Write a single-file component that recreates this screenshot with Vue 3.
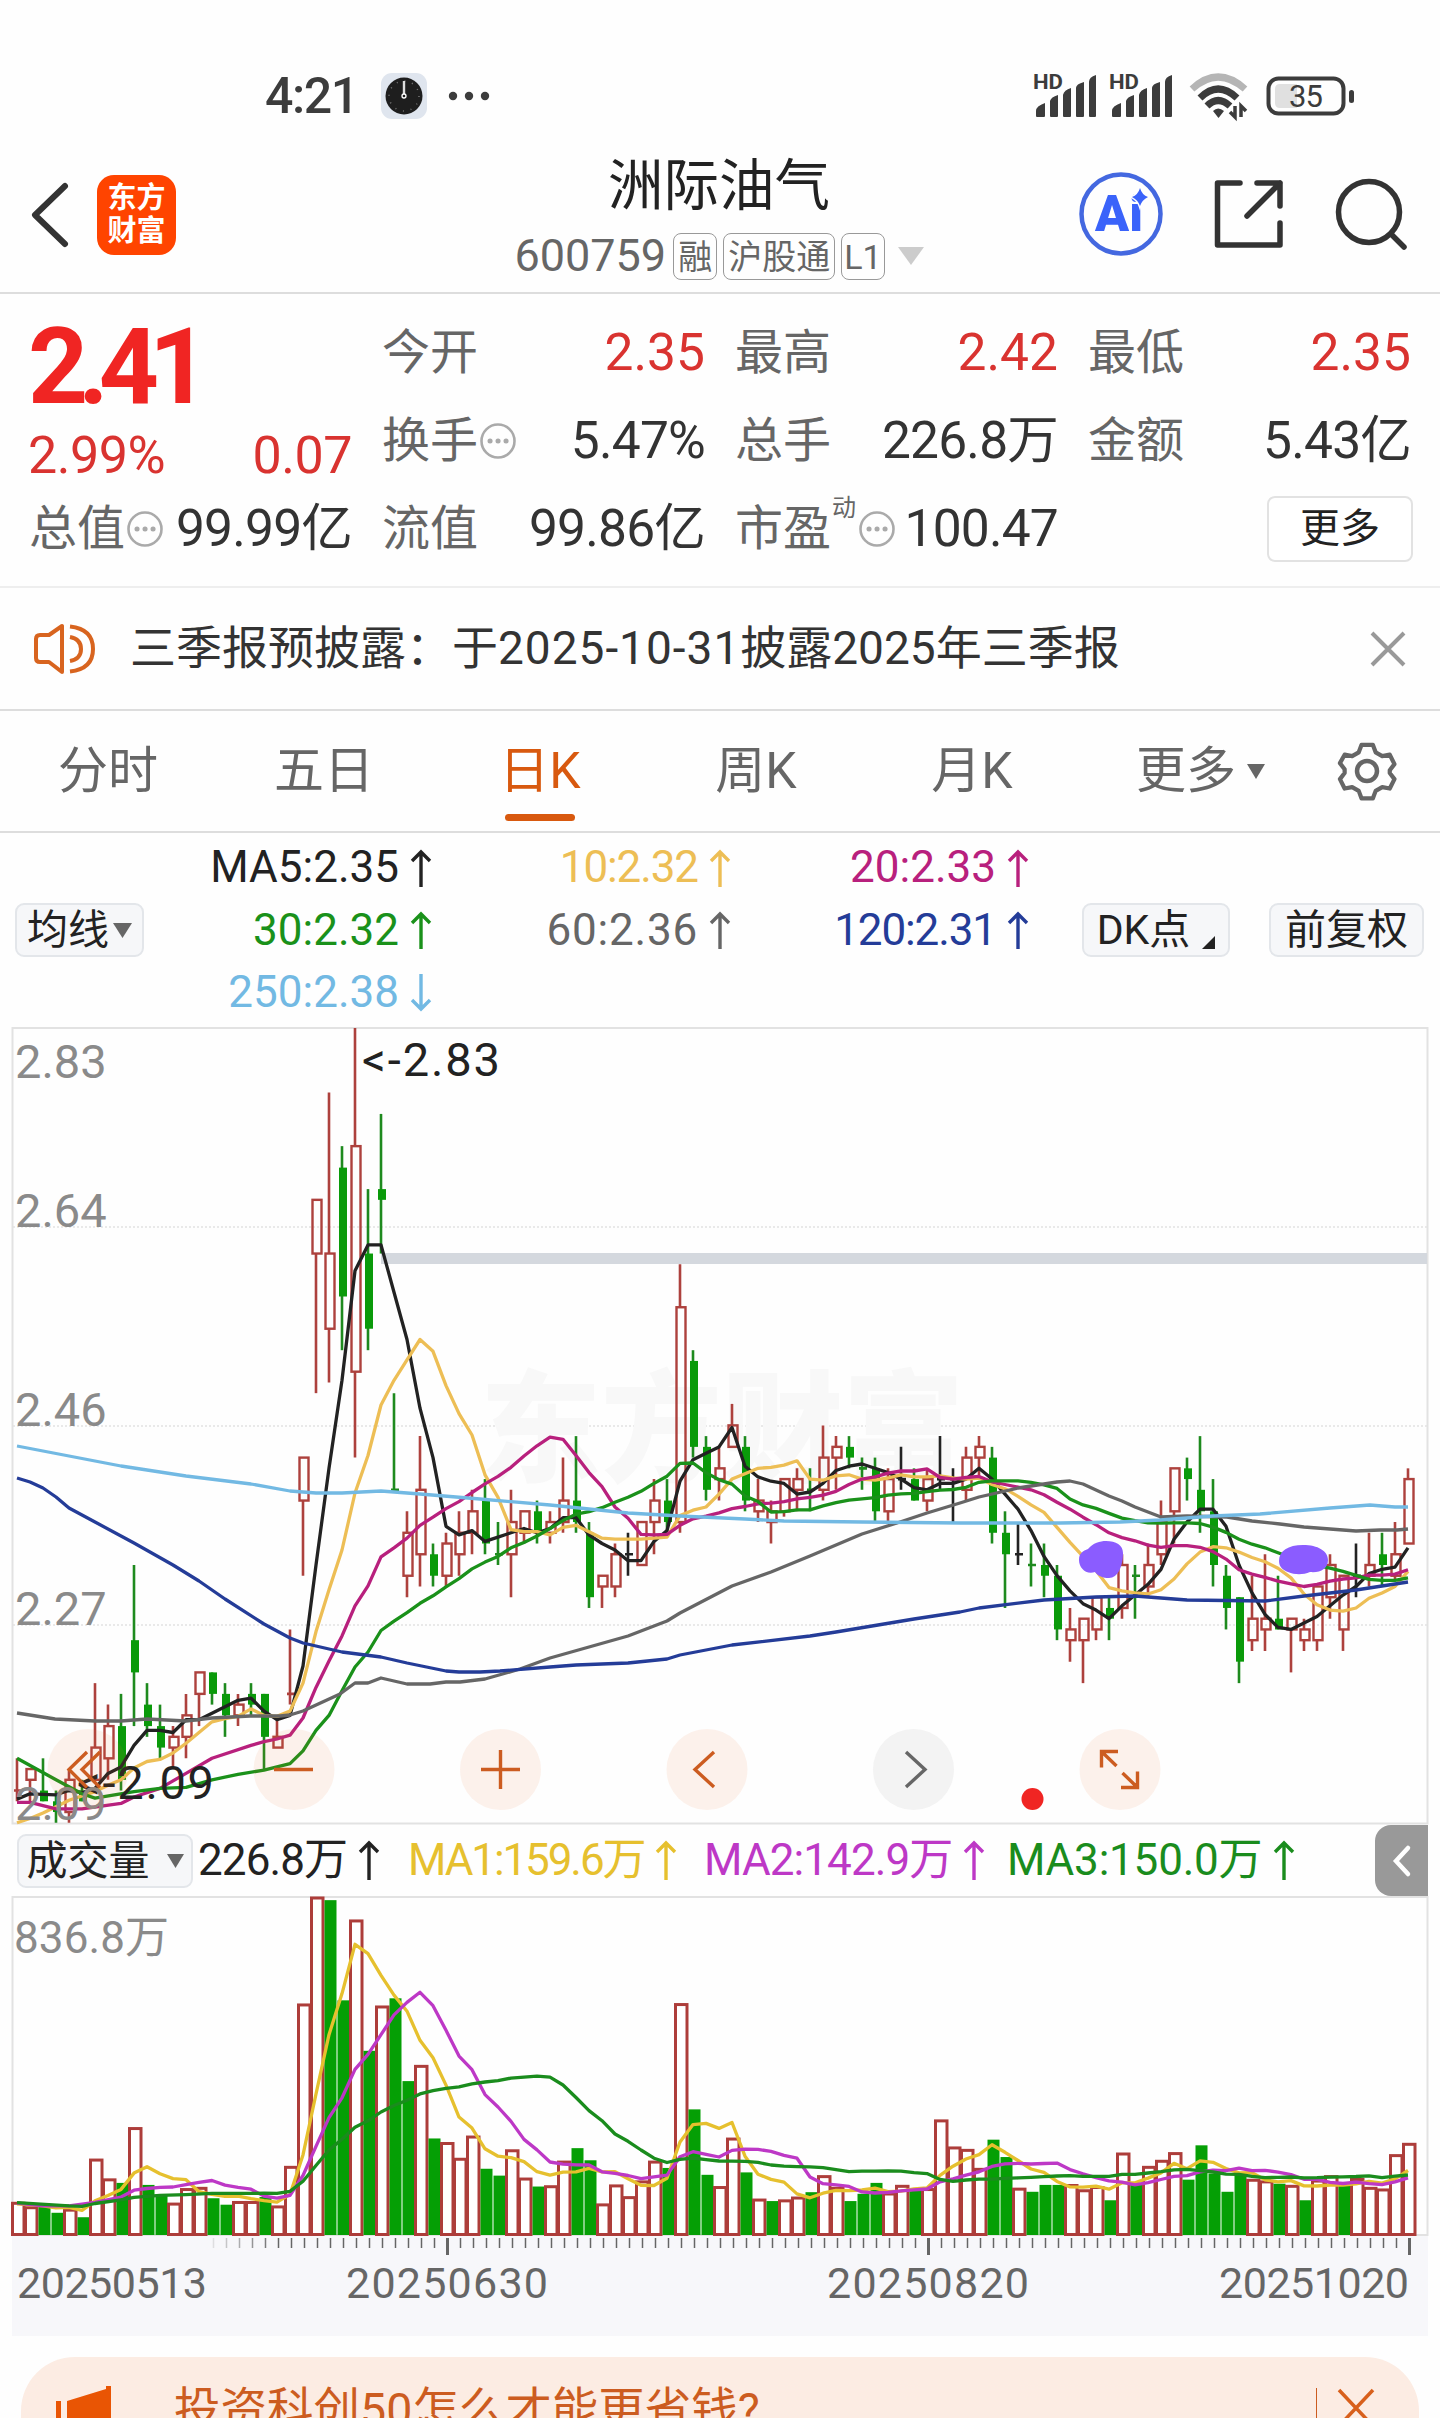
<script setup>
// [open, close, high, low] in cents, one entry per trading day
const days = [
  [212, 212, 215, 211], [213, 214, 214, 211], [212, 211, 215, 211], [211, 210, 212, 209],
  [210, 213, 214, 209], [212, 211, 213, 211], [213, 216, 222, 213], [215, 218, 220, 213],
  [218, 213, 221, 212], [226, 223, 233, 218], [220, 218, 222, 217], [218, 216, 220, 215],
  [216, 217, 218, 214], [217, 219, 221, 215], [221, 223, 223, 218], [223, 221, 223, 220],
  [221, 219, 222, 217], [219, 220, 221, 218], [221, 220, 222, 219], [221, 217, 221, 214],
  [216, 217, 219, 216], [221, 221, 227, 220], [239, 243, 243, 232], [262, 267, 267, 249],
  [255, 262, 277, 250], [270, 258, 272, 253], [251, 272, 283, 243], [262, 255, 268, 253],
  [268, 267, 275, 262], [240, 240, 249, 240], [232, 236, 238, 230], [234, 240, 245, 231],
  [234, 232, 235, 231], [232, 235, 236, 231], [234, 236, 238, 232], [236, 238, 240, 234],
  [239, 235, 241, 234], [234, 234, 237, 233], [234, 237, 240, 230], [236, 238, 238, 235],
  [238, 236, 239, 235], [236, 237, 238, 235], [237, 239, 243, 236], [239, 237, 245, 236],
  [236, 230, 237, 229], [231, 232, 232, 229], [231, 234, 235, 230], [234, 234, 236, 232],
  [233, 237, 237, 233], [237, 239, 241, 234], [239, 237, 241, 236], [237, 257, 261, 236],
  [252, 244, 253, 243], [244, 240, 245, 239], [241, 242, 244, 239], [244, 246, 248, 244],
  [244, 239, 245, 238], [238, 239, 241, 237], [237, 238, 239, 235], [238, 241, 241, 237.5],
  [240, 241, 242, 238], [240, 240, 242, 238], [240, 243, 246, 239], [243, 244, 245, 240],
  [244, 243, 245, 242], [242, 242, 243, 240], [242, 238, 243, 237], [238, 241, 242, 237],
  [241, 241, 244, 240], [241, 239, 242, 239], [239, 241, 242, 238], [241, 241, 245, 240],
  [241, 241, 242, 237], [240, 243, 244, 239], [243, 244, 245, 241], [243, 236, 244, 235],
  [236, 234, 238, 229], [234, 234, 237, 233], [233, 233, 235, 231], [233, 232, 235, 230],
  [232, 227, 233, 226], [226, 227, 229, 224], [226, 228, 228, 222], [227, 230, 230, 226],
  [229, 228, 230, 226], [229, 233, 234, 228], [232, 232, 233, 228], [231, 233, 235, 230],
  [234, 237, 239, 233], [238, 242, 242, 235], [242, 241, 243, 239], [240, 238, 245, 236],
  [238, 233, 241, 231], [232, 229, 233, 227], [230, 224, 230, 222], [226, 228, 232, 225],
  [227, 228, 234, 225], [228, 227, 232, 227], [227, 228, 228, 223], [226, 227, 228, 225],
  [226, 231, 231, 225], [230, 233, 234, 228], [227, 232, 232, 225], [232, 232, 235, 230],
  [232, 233, 236, 231], [234, 233, 236, 231], [232, 234, 237, 231.5], [235, 241, 242, 235]
]

// daily volume, in 万
const volumes = [
  81, 70, 72, 55, 64, 44, 188, 139, 129, 266, 124, 100, 79, 115, 118, 91, 75, 83, 83, 94,
  72, 170, 572, 836.8, 829, 581, 780, 456, 567, 586, 381, 420, 239, 229, 190, 245, 164, 147, 211, 141,
  120, 122, 183, 215, 185, 77, 124, 95, 134, 183, 166, 573, 311, 149, 120, 240, 155, 89, 84, 87,
  94, 106, 147, 118, 84, 102, 129, 104, 123, 111, 115, 285, 218, 212, 165, 236, 193, 116, 107, 124,
  124, 125, 112, 120, 86, 203, 125, 170, 185, 204, 137, 222, 152, 107, 152, 138, 134, 127, 123, 86,
  136, 147, 124, 140, 118, 114, 199, 227
]

const dayX = (i) => 17 + 13 * i
const priceY = (p) => 1028 + (283 - p) * 10.74
const volumeY = (v) => 2235 - (v * 338) / 836.8

const closes = days.map((d) => d[1])
const lastClose = (i) => (i === 0 ? 211 : closes[i - 1])

const candles = days.map(([open, close, high, low], i) => {
  let kind = close > open ? 'up' : 'down'
  if (open === close) {
    kind = close > lastClose(i) ? 'up' : close < lastClose(i) ? 'down' : 'flat'
  }
  return {
    x: dayX(i),
    kind,
    doji: open === close,
    high: priceY(high),
    low: priceY(low),
    top: priceY(Math.max(open, close)),
    bottom: priceY(Math.min(open, close))
  }
})

const bars = volumes.map((v, i) => ({
  x: dayX(i),
  up: closes[i] >= lastClose(i),
  y: volumeY(v)
}))

// Moving average as polyline points; seed covers the days before a full window exists
function average(values, size, seed, toY) {
  const points = seed.map(([i, v]) => [dayX(i), toY(v)])
  for (let i = size - 1; i < values.length; i++) {
    const sum = values.slice(i - size + 1, i + 1).reduce((a, b) => a + b, 0)
    points.push([dayX(i), toY(sum / size)])
  }
  return points.map(([x, y]) => `${x},${y.toFixed(1)}`).join(' ')
}

const priceLines = [
  { cls: 'ma5', points: average(closes, 5, [[0, 211.2], [1, 211.7], [3, 211.6]], priceY) },
  { cls: 'ma10', points: average(closes, 10, [[0, 209], [1, 209.4], [2, 209.9], [3, 210.5], [4, 211.1], [6, 211.9], [7, 212.5], [8, 213]], priceY) },
  { cls: 'ma20', points: average(closes, 20, [[0, 210.9], [1, 210.9], [2, 210.6], [3, 210.3], [5, 210.3], [8, 210.8], [9, 211.4], [11, 212.2], [13, 213.6], [15, 215], [18, 216.2]], priceY) },
  { cls: 'ma30', points: average(closes, 30, [[0, 215], [3, 213], [5, 211.7], [6, 211.3], [9, 211.9], [11, 212.2], [13, 212.3], [15, 213], [17, 213.5], [19, 213.9], [21, 214.5], [22, 215.7], [23, 217.6], [24, 219], [25, 221.3], [26, 223.5], [27, 224.9], [28, 226.9]], priceY) },
  { cls: 'ma60', points: '17,1713 55,1719 75,1720 95,1721 121,1721 147,1719 186,1721 212,1718 250,1716 280,1716 290,1715 303,1711 340,1694 355,1683 368,1683 381,1678 407,1684 430,1684 446,1682 460,1682 485,1679 520,1669 550,1658 628,1636 667,1621 680,1613 732,1586 771,1572 810,1556 862,1534 897,1523 927,1513 960,1503 979,1497 1018,1488 1057,1482 1070,1481 1083,1484 1109,1496 1122,1501 1135,1507 1161,1517 1187,1516 1227,1517 1252,1521 1280,1524 1304,1527 1330,1529 1356,1531 1380,1530 1397,1530 1408,1529' },
  { cls: 'ma120', points: '17,1478 30,1482 43,1488 56,1497 69,1508 95,1522 121,1536 134,1543 173,1565 199,1581 225,1599 264,1624 290,1638 303,1643 342,1652 381,1657 407,1663 446,1671 459,1672 480,1672 500,1671 550,1667 576,1665 628,1663 667,1659 680,1655 732,1645 810,1636 836,1632 914,1619 960,1612 979,1608 1044,1600 1096,1597 1135,1596 1161,1598 1187,1600 1265,1601 1304,1596 1356,1590 1408,1582' },
  { cls: 'ma250', points: '17,1446 69,1456 121,1466 186,1476 251,1484 290,1491 316,1493 342,1493 381,1491 420,1494 480,1499 550,1505 628,1513 680,1516 745,1519 784,1521 862,1522 960,1523 1060,1523 1120,1522 1160,1520 1187,1518 1213,1516 1260,1514 1330,1508 1370,1505 1382,1506 1395,1507 1408,1507' }
]

const volumeLines = [
  { cls: 'vma1', points: average(volumes, 5, [[0, 77], [2, 72], [3, 67]], volumeY) },
  { cls: 'vma2', points: average(volumes, 10, [[0, 79], [2, 72], [4, 72], [6, 81], [8, 94]], volumeY) },
  { cls: 'vma3', points: average(volumes, 20, [[0, 80], [4, 72], [5, 71], [6, 78], [8, 87], [9, 93], [11, 98], [13, 100], [15, 103], [18, 103]], volumeY) }
]

const priceLabels = [
  { text: '2.83', y: 1078 },
  { text: '2.64', y: 1227 },
  { text: '2.46', y: 1426 },
  { text: '2.27', y: 1625 },
  { text: '2.09', y: 1820 }
]

const ticks = days
  .map((_, i) => ({ x: dayX(i) + 1.5, major: [33, 70, 107].includes(i), opacity: Math.min(1, (i - 14) / 6) }))
  .slice(15)

const dates = [
  { text: '20250513', x: 17, w: 190 },
  { text: '20250630', x: 346, w: 202 },
  { text: '20250820', x: 827, w: 202 },
  { text: '20251020', x: 1219, w: 190 }
]

const tabs = ['分时', '五日', '日K', '周K', '月K']

const legend = [
  { text: 'MA5:2.35', cls: 'ma5', up: true },
  { text: '10:2.32', cls: 'ma10 tight', up: true },
  { text: '20:2.33', cls: 'ma20', up: true },
  { text: '30:2.32', cls: 'ma30', up: true },
  { text: '60:2.36', cls: 'ma60 loose', up: true },
  { text: '120:2.31', cls: 'ma120 tight', up: true },
  { text: '250:2.38', cls: 'ma250', up: false }
]

const volumeLegend = [
  { text: '226.8万', cls: 'ma5' },
  { text: 'MA1:159.6万', cls: 'vma1 tight' },
  { text: 'MA2:142.9万', cls: 'vma2' },
  { text: 'MA3:150.0万', cls: 'vma3 loose' }
]

const stats = [
  { label: '今开', value: '2.35', red: true },
  { label: '最高', value: '2.42', red: true },
  { label: '最低', value: '2.35', red: true },
  { label: '换手', value: '5.47%', info: true },
  { label: '总手', value: '226.8万' },
  { label: '金额', value: '5.43亿' }
]

const valuation = [
  { label: '总值', value: '99.99亿', info: true },
  { label: '流值', value: '99.86亿' },
  { label: '市盈', value: '100.47', info: true, sup: '动' }
]
</script>

<template>
  <div class="screen">
    <div class="status-bar">
      <div class="status-left">
        <span class="clock">4:21</span>
        <svg class="clock-icon" width="46" height="46" viewBox="0 0 46 46">
          <rect width="46" height="46" rx="11" fill="#dfe5ee" />
          <circle cx="23" cy="23" r="18.5" fill="#1e1e1e" />
          <circle cx="23" cy="23" r="15" fill="none" stroke="#777" stroke-width="1.5" stroke-dasharray="1 6.85" />
          <path d="M23 8v13" stroke="#ddd" stroke-width="2.4" />
          <circle cx="23" cy="23" r="2" fill="none" stroke="#fff" stroke-width="1.3" />
        </svg>
        <svg width="42" height="10" viewBox="0 0 42 10" fill="#3c3c3c">
          <circle cx="5" cy="5" r="4.2" /><circle cx="21" cy="5" r="4.2" /><circle cx="37" cy="5" r="4.2" />
        </svg>
      </div>
      <div class="status-right">
        <svg v-for="n in 2" :key="n" class="signal" width="64" height="46" viewBox="0 -4 64 46" fill="#3c3c3c">
          <text x="0" y="14" font-size="20" font-weight="700" textLength="30" lengthAdjust="spacingAndGlyphs">HD</text>
          <path d="M3 41v-5q0-5 9-8v13q0 1-1 1H4q-1 0-1-1zM17 41V26q1-4 8-6v21q0 1-1 1h-6q-1 0-1-1zM30 41V20q1-5 8-7v28q0 1-1 1h-6q-1 0-1-1zM43 41V13q0-4 8-6v34q0 1-1 1h-6q-1 0-1-1zM56 41V7q0-5 7-7v41q0 1-1 1h-5q-1 0-1-1z" />
        </svg>
        <svg class="wifi" width="60" height="46" viewBox="0 0 60 46" fill="none" stroke="#3c3c3c" stroke-width="7">
          <path d="M3 16Q29-8 56 16" stroke="#b5b5b5" />
          <path d="M11 25Q29 7 48 25" />
          <path d="M18 33Q29 22 41 33" />
          <path d="M24 38q5-5 11 0l-5.5 7z" fill="#3c3c3c" stroke="none" />
          <path d="M46 33v11l-5-5M52 44V33l5 5" stroke-width="3.5" />
        </svg>
        <svg width="90" height="40" viewBox="0 0 90 40">
          <rect x="2.5" y="2.5" width="75" height="35" rx="10" fill="none" stroke="#3c3c3c" stroke-width="4" />
          <path d="M14 8h17v24H14q-5 0-5-5V13q0-5 5-5z" fill="#e0e0e0" />
          <text x="23" y="31" font-size="31" fill="#3c3c3c" textLength="34">35</text>
          <rect x="83" y="14" width="5" height="13" rx="2.5" fill="#3c3c3c" />
        </svg>
      </div>
    </div>

    <div class="header">
      <div class="header-left">
        <svg width="38" height="66" viewBox="0 0 38 66" fill="none" stroke="#333" stroke-width="6" stroke-linecap="round" stroke-linejoin="round">
          <path d="M34 4L4 33l30 29" />
        </svg>
        <div class="logo"><span>东方</span><span>财富</span></div>
      </div>
      <div class="title">
        <div class="stock-name">洲际油气</div>
        <div class="stock-sub">
          <span class="code">600759</span>
          <span class="chip">融</span>
          <span class="chip">沪股通</span>
          <span class="chip narrow">L1</span>
          <svg class="sub-arrow" width="26" height="18" viewBox="0 0 26 18"><path d="M0 0h26L13 18z" fill="#ccc" /></svg>
        </div>
      </div>
      <div class="header-right">
        <svg width="84" height="84" viewBox="0 0 84 84">
          <circle cx="42" cy="42" r="39.5" fill="none" stroke="#4468e0" stroke-width="4.5" />
          <text class="ai" x="16" y="59" textLength="48">Ai</text>
          <path d="M61 16q2 7 8 9-6 3-8 9-2-6-8-9 6-2 8-9z" fill="#3a63fa" stroke="#fefefe" stroke-width="3" paint-order="stroke" />
        </svg>
        <svg width="70" height="70" viewBox="0 0 70 70" fill="none" stroke="#333" stroke-width="5.5" stroke-linecap="round" stroke-linejoin="round">
          <path d="M26 4H3.5v62H66V44M43 4h23v23M66 4L33 37" />
        </svg>
        <svg width="72" height="72" viewBox="0 0 72 72" fill="none" stroke="#333" stroke-width="5.5" stroke-linecap="round">
          <circle cx="34" cy="34" r="30.5" /><path d="M56 56l13 13" />
        </svg>
      </div>
    </div>

    <div class="quote">
      <div class="quote-main">
        <div class="price">2.41</div>
        <div class="change"><span>2.99%</span><span>0.07</span></div>
      </div>
      <div v-for="s in stats" :key="s.label" class="stat">
        <span class="label">{{ s.label }}</span>
        <svg v-if="s.info" class="info" width="36" height="36" viewBox="0 0 36 36">
          <circle cx="18" cy="18" r="16.5" fill="none" stroke="#aaa" stroke-width="2.6" />
          <path d="M10 18h.1M18 18h.1M26 18h.1" stroke="#aaa" stroke-width="5" stroke-linecap="round" />
        </svg>
        <span class="value" :class="{ red: s.red }">{{ s.value }}</span>
      </div>
      <div v-for="s in valuation" :key="s.label" class="stat">
        <span class="label">{{ s.label }}</span>
        <span v-if="s.sup" class="sup">{{ s.sup }}</span>
        <svg v-if="s.info" class="info" width="36" height="36" viewBox="0 0 36 36">
          <circle cx="18" cy="18" r="16.5" fill="none" stroke="#aaa" stroke-width="2.6" />
          <path d="M10 18h.1M18 18h.1M26 18h.1" stroke="#aaa" stroke-width="5" stroke-linecap="round" />
        </svg>
        <span class="value">{{ s.value }}</span>
      </div>
      <div class="more-cell"><button class="more">更多</button></div>
    </div>

    <div class="notice">
      <svg width="62" height="52" viewBox="0 0 62 52" fill="none" stroke="#d8641f" stroke-width="4" stroke-linejoin="round">
        <path d="M28 3v46L15 39H6q-4 0-4-4V16q0-4 4-4h9z" />
        <path d="M36 14q11 2 11 12T36 38M36 3.5Q59 6 59 26T36 48.5" />
      </svg>
      <div class="notice-text">三季报预披露：于<span class="notice-date">2025-10-31</span>披露2025年三季报</div>
      <svg width="34" height="34" viewBox="0 0 34 34" stroke="#999" stroke-width="4"><path d="M1 1l32 32M33 1L1 33" /></svg>
    </div>

    <div class="tabs">
      <div v-for="tab in tabs" :key="tab" class="tab" :class="{ active: tab === '日K' }">{{ tab }}</div>
      <div class="tab-more">
        更多
        <svg width="18" height="15" viewBox="0 0 18 15"><path d="M0 0h18L9 15z" fill="#666" /></svg>
      </div>
      <svg class="gear" width="60" height="62" viewBox="0 0 60 62" fill="none" stroke="#666" stroke-width="4.5" stroke-linejoin="round">
        <path d="M24 3h12l3 8 7 4 8-1.5 5 10-5 6.500v3l5 6.500-5 10-8-1.500-7 4-3 8H24l-3-8-7-4-8 1.500-5-10L6 33v-4L1 22.500l5-9L14 15l7-4z" transform="translate(2 2) scale(.94)" />
        <circle cx="30" cy="31" r="10" />
      </svg>
    </div>

    <div class="ma-bar">
      <button class="pill ma-pill">均线<svg width="19" height="15" viewBox="0 0 19 15"><path d="M0 0h19L9.5 15z" fill="#666" /></svg></button>
      <div class="legend">
        <div v-for="item in legend" :key="item.text" class="legend-item" :class="item.cls">
          {{ item.text }}
          <svg width="20" height="38" viewBox="0 0 20 38" fill="none" stroke="currentColor" stroke-width="3.4">
            <path :d="item.up ? 'M10 38V3M1 12l9-9 9 9' : 'M10 0v35M1 26l9 9 9-9'" />
          </svg>
        </div>
      </div>
      <button class="pill dk">DK点<svg width="13" height="13" viewBox="0 0 13 13"><path d="M13 0v13H0z" fill="#222" /></svg></button>
      <button class="pill adjust">前复权</button>
    </div>

    <svg class="price-chart" width="1440" height="798" viewBox="0 1027 1440 798">
      <path class="grid" d="M13 1227H1427M13 1426H1427M13 1625H1427" />
      <text class="watermark" x="480" y="1472" textLength="484">东方财富</text>
      <rect class="frame" x="12.5" y="1028" width="1415" height="795.5" />
      <rect x="381" y="1253" width="1046" height="11" fill="#d4d8de" />

      <g v-for="c in candles" :key="c.x" :class="c.kind">
        <template v-if="c.doji">
          <path class="stroke" :d="`M${c.x} ${c.high}V${c.low}M${c.x - 3} ${c.top}h8`" />
        </template>
        <template v-else-if="c.kind === 'up'">
          <path class="stroke" :d="`M${c.x} ${c.high}V${c.top}M${c.x} ${c.bottom}V${c.low}`" />
          <rect class="hollow" :x="c.x - 3.5" :y="c.top" width="9" :height="c.bottom - c.top" />
        </template>
        <template v-else>
          <path class="stroke" :d="`M${c.x} ${c.high}V${c.low}`" />
          <rect class="solid" :x="c.x - 3" :y="c.top" width="8" :height="c.bottom - c.top" />
        </template>
      </g>

      <polyline v-for="l in priceLines" :key="l.cls" class="line" :class="l.cls" :points="l.points" />

      <g fill="#8b5cff">
        <path d="M1079 1560c0-7 4-9 9-11 5-6 12-8 18-8 10 0 17 4 17 12 0 13-5 25-14 25-6 0-11-2-14-6-9 3-16-4-16-12z" />
        <path d="M1279 1561c0-10 9-16 24-16s25 6 25 15-8 13-18 12c-7 3-15 3-22 0-5-2-9-5-9-11z" />
      </g>

      <text class="mark" x="362" y="1076" textLength="138">&lt;-2.83</text>
      <text class="mark" x="77" y="1799" textLength="137">&lt;-2.09</text>
      <text v-for="l in priceLabels" :key="l.text" class="axis-label" x="15" :y="l.y">{{ l.text }}</text>

      <g class="control">
        <circle cx="88" cy="1769.5" r="40.5" />
        <path d="M87 1752l-18 17.5 18 18M100 1752l-18 17.5 18 18" />
        <circle cx="294" cy="1769.5" r="40.5" />
        <path d="M274 1769.5h39" />
        <circle cx="500.5" cy="1769.5" r="40.5" />
        <path d="M481 1769.5h39M500.5 1750v39" />
        <circle cx="707" cy="1769.5" r="40.5" />
        <path d="M714 1752l-19 17.5 19 17.5" />
        <circle cx="1120" cy="1769.5" r="40.5" />
        <path d="M1118 1751.5h-16.5v16M1102 1752l14.5 14M1121 1787.5h16.5v-16M1137 1787l-14.5-14" />
      </g>
      <circle cx="913.5" cy="1769.5" r="40.5" fill="#f3f3f3" />
      <path d="M906 1752l19 17.5-19 17.5" fill="none" stroke="#666" stroke-width="3.4" />
      <circle cx="1032.5" cy="1799" r="11" fill="#f02523" />
    </svg>

    <div class="volume-bar">
      <button class="pill volume-pill">成交量<svg width="17" height="14" viewBox="0 0 17 14"><path d="M0 0h17L8.5 14z" fill="#666" /></svg></button>
      <div class="volume-legend">
        <div v-for="item in volumeLegend" :key="item.text" class="legend-item" :class="item.cls">
          {{ item.text }}
          <svg width="20" height="40" viewBox="0 0 20 40" fill="none" stroke="currentColor" stroke-width="3.4">
            <path d="M10 40V3M1 12l9-9 9 9" />
          </svg>
        </div>
      </div>
      <div class="drawer">
        <svg width="18" height="32" viewBox="0 0 18 32" fill="none" stroke="#fff" stroke-width="4.5" stroke-linecap="round"><path d="M15 3L3 16l12 13" /></svg>
      </div>
    </div>

    <svg class="volume-chart" width="1440" height="440" viewBox="0 1896 1440 440">
      <rect x="12" y="2236" width="1416" height="100" fill="#f7f7fa" />
      <rect class="frame" x="12.5" y="1897" width="1415" height="338" />
      <text class="axis-label volume-max" x="14" y="1953" textLength="155">836.8万</text>
      <template v-for="b in bars" :key="b.x">
        <rect v-if="b.up" class="bar-up" :x="b.x - 4.5" :y="b.y + 1" width="11.5" :height="2233.5 - b.y" />
        <rect v-else class="bar-down" :x="b.x - 4.5" :y="b.y" width="12" :height="2235 - b.y" />
      </template>
      <polyline v-for="l in volumeLines" :key="l.cls" class="line" :class="l.cls" :points="l.points" />
      <path
        v-for="t in ticks"
        :key="t.x"
        :d="`M${t.x} 2238v${t.major ? 17 : 10}`"
        stroke="#666"
        :stroke-width="t.major ? 3 : 1.5"
        :opacity="t.opacity"
      />
      <text v-for="d in dates" :key="d.text" class="date" :x="d.x" y="2298" :textLength="d.w">{{ d.text }}</text>
    </svg>

    <div class="banner">
      <svg class="horn" width="56" height="70" viewBox="0 0 56 70" fill="#e95504"><path d="M0 15h5v55H0zM11 15L50 3V0h5v70H11z" /></svg>
      <div class="banner-text">投资科创50怎么才能更省钱?</div>
      <div class="banner-close">
        <svg width="38" height="40" viewBox="0 0 38 40" stroke="#d8601c" stroke-width="3.5"><path d="M2 2l34 36M36 2L2 38" /></svg>
      </div>
    </div>
  </div>
</template>

<style>
body {
  background: #fff;
  overflow: hidden;
}
</style>

<style scoped>
.screen {
  width: 1440px;
  height: 2418px;
  overflow: hidden;
  background: #fefefe;
  color: #333;
  font-family: Roboto, "Noto Sans CJK SC", sans-serif;
  line-height: 1.2;
}

.screen svg {
  display: block;
  flex: none;
  overflow: visible;
}

button {
  font-family: inherit;
}

.status-bar {
  display: flex;
  justify-content: space-between;
  align-items: center;
  height: 64px;
  padding: 64px 84px 0 265px;
}

.status-left,
.status-right {
  display: flex;
  align-items: center;
}

.clock {
  width: 87px;
  font-size: 50px;
  font-weight: 500;
  letter-spacing: -1.4px;
  color: #3c3c3c;
}

.clock-icon {
  margin: 0 21px 0 29px;
}

.signal {
  margin: 0 12px 4px 0;
}

.wifi {
  margin: 0 17px 0 4px;
}

.header {
  display: grid;
  grid-template-columns: 1fr auto 1fr;
  align-items: center;
  height: 164px;
  border-bottom: 2px solid #ddd;
  padding: 0 33px 0 31px;
}

.header-left {
  display: flex;
  align-items: center;
  gap: 28px;
  padding-top: 10px;
}

.logo {
  display: flex;
  flex-direction: column;
  align-items: center;
  justify-content: center;
  width: 79px;
  height: 80px;
  border-radius: 17px;
  background: #ff4400;
  color: #fff;
  font-size: 29px;
  font-weight: 700;
  line-height: 33px;
}

.title {
  display: flex;
  flex-direction: column;
  align-items: center;
  padding-top: 14px;
}

.stock-name {
  font-size: 55.5px;
  line-height: 66px;
  color: #222;
}

.stock-sub {
  display: flex;
  align-items: center;
  color: #666;
  margin-top: 12px;
}

.code {
  font-size: 45px;
  line-height: 48px;
  margin-right: 7px;
}

.chip {
  height: 45px;
  border: 1.5px solid #999;
  border-radius: 8px;
  padding: 0 4px;
  margin-right: 6px;
  font-size: 34px;
  line-height: 46px;
}

.chip.narrow {
  padding: 0 2px;
}

.sub-arrow {
  margin-left: 7px;
}

.header-right {
  display: flex;
  align-items: center;
  justify-content: flex-end;
  gap: 51px;
  padding-top: 8px;
}

.ai {
  fill: #3a63fa;
  font-size: 50px;
  font-weight: 900;
}

.quote {
  display: grid;
  grid-template-columns: repeat(4, 322px);
  grid-template-rows: repeat(3, 88px);
  column-gap: 31px;
  height: 264px;
  padding: 15px 30px 13px;
  border-bottom: 2px solid #eee;
}

.quote-main {
  grid-row: span 2;
  margin-left: -2px;
  color: #f02523;
}

.price {
  height: 90px;
  padding-top: 6px;
  font-size: 105px;
  font-weight: 700;
  line-height: 106px;
  letter-spacing: -10px;
}

.change {
  display: flex;
  justify-content: space-between;
  padding-top: 23px;
  font-size: 52px;
  line-height: 56px;
  letter-spacing: -0.5px;
  color: #d93330;
}

.stat {
  display: flex;
  align-items: center;
  white-space: nowrap;
}

.label {
  margin-left: -1px;
  font-size: 48px;
  color: #666;
}

.info {
  margin-left: 2px;
}

.sup {
  align-self: flex-start;
  margin: 9px 1px 0 1px;
  font-size: 24px;
  line-height: 28px;
  color: #666;
}

.value {
  margin-left: auto;
  font-size: 51.5px;
  letter-spacing: -0.8px;
}

.red {
  color: #d93330;
  letter-spacing: 0;
}

.more-cell {
  display: flex;
  align-items: center;
  justify-content: flex-end;
  margin-right: -2px;
}

.more {
  width: 146px;
  height: 66px;
  border: 2px solid #e2e2e2;
  border-radius: 8px;
  background: #fff;
  color: #222;
  font-size: 40px;
  line-height: 60px;
}

.notice {
  display: flex;
  align-items: center;
  height: 121px;
  padding: 0 35px 0 34px;
  border-bottom: 2px solid #ddd;
}

.notice-text {
  flex: 1;
  margin-left: 34px;
  font-size: 46px;
  white-space: nowrap;
}

.notice-date {
  letter-spacing: 1px;
}

.tabs {
  display: flex;
  align-items: center;
  height: 120px;
  border-bottom: 2px solid #ddd;
  font-size: 50px;
  color: #666;
}

.tab {
  display: flex;
  flex-direction: column;
  align-items: center;
  justify-content: center;
  width: 216px;
  height: 120px;
}

.tab.active {
  color: #d8590f;
}

.tab.active::after {
  content: "";
  width: 70px;
  height: 7px;
  margin: 13px 0 -20px;
  border-radius: 4px;
  background: #d8590f;
}

.tab-more {
  display: flex;
  align-items: center;
  gap: 11px;
  margin-left: 56px;
}

.gear {
  margin-left: 72px;
}

.ma-bar {
  display: flex;
  align-items: center;
  height: 194px;
  padding: 0 16px 0 15px;
}

.pill {
  display: flex;
  align-items: center;
  justify-content: center;
  height: 54px;
  padding: 0;
  border: 2px solid #e3e6ea;
  border-radius: 9px;
  background: #f6f7f9;
  color: #222;
  font-size: 41px;
  line-height: 50px;
  gap: 4px;
  white-space: nowrap;
}

.ma-pill {
  width: 129px;
}

.pill.dk {
  margin: 0 39px 0 auto;
  width: 148px;
  gap: 12px;
}

.pill.dk svg {
  align-self: flex-end;
  margin-bottom: 6px;
}

.pill.adjust {
  width: 155px;
}

.legend {
  display: grid;
  grid-template-columns: 287px 299px 298px;
  grid-auto-rows: 62.5px;
}

.legend-item {
  display: flex;
  align-items: center;
  justify-content: flex-end;
  gap: 12px;
  font-size: 44px;
  white-space: nowrap;
}

.ma5 { color: #222; stroke: #222; }
.ma10 { color: #edbe55; stroke: #edbe55; }
.ma20 { color: #b8207d; stroke: #b8207d; }
.ma30 { color: #1a911a; stroke: #1a911a; }
.ma60 { color: #666; stroke: #666; }
.ma120 { color: #243c98; stroke: #243c98; }
.ma250 { color: #72b9e3; stroke: #72b9e3; }
.vma1 { color: #e6c02e; stroke: #e6c02e; }
.vma2 { color: #bd38c6; stroke: #bd38c6; }
.vma3 { color: #1a8c1d; stroke: #1a8c1d; }

.legend-item {
  stroke: none;
}

.legend-item.tight {
  letter-spacing: -1.1px;
}

.legend-item.loose {
  letter-spacing: 0.8px;
}

.line {
  fill: none;
  stroke-width: 3.3;
  stroke-linejoin: round;
}

.frame {
  fill: none;
  stroke: #e2e2e2;
  stroke-width: 2;
}

.grid {
  stroke: #e2e2e2;
  stroke-width: 1.5;
  stroke-dasharray: 2 2;
}

.watermark {
  font-size: 121px;
  font-weight: 900;
  fill: #f8f8f8;
}

.axis-label {
  font-size: 47px;
  fill: #8a8a8a;
}

.volume-max {
  font-size: 44px;
}

.mark {
  font-size: 47px;
  fill: #222;
}

.up { --tone: #ad413d; }
.down { --tone: #1e8a1e; }
.flat { --tone: #222; }

.stroke {
  stroke: var(--tone);
  stroke-width: 2.6;
  fill: none;
}

.hollow {
  fill: none;
  stroke: var(--tone);
  stroke-width: 2.4;
}

.solid {
  fill: #0a9a0a;
}

.bar-up {
  fill: #fff;
  stroke: #ad3d3a;
  stroke-width: 3;
}

.bar-down {
  fill: #059f05;
}

.control circle {
  fill: #ee6a2a;
  fill-opacity: 0.09;
}

.control path {
  fill: none;
  stroke: #cc5c20;
  stroke-width: 3.4;
}

.volume-bar {
  display: flex;
  align-items: center;
  height: 71px;
  padding: 0 12px 0 17px;
}

.volume-pill {
  width: 176px;
  gap: 17px;
}

.volume-legend {
  display: grid;
  grid-template-columns: 210px 296px 303px 300px;
  margin-left: 5px;
}

.volume-legend .legend-item {
  justify-content: flex-start;
  letter-spacing: -0.9px;
}

.volume-legend .tight {
  letter-spacing: -2.1px;
}

.volume-legend .loose {
  letter-spacing: -0.2px;
}

.drawer {
  display: flex;
  align-items: center;
  justify-content: center;
  width: 53px;
  height: 71px;
  margin-left: auto;
  border-radius: 16px 0 0 16px;
  background: #999;
}

.date {
  font-size: 43px;
  fill: #666;
}

.banner {
  display: flex;
  align-items: flex-start;
  height: 120px;
  margin: 21px 21px 0;
  border-radius: 54px;
  background: #fcece3;
  color: #cc5c20;
}

.horn {
  margin: 29px 0 0 35px;
}

.banner-text {
  margin: 25px 0 0 62px;
  font-size: 46.5px;
  line-height: 56px;
}

.banner-close {
  display: flex;
  align-items: flex-start;
  height: 80px;
  margin: 31px 44px 0 auto;
  padding-left: 20px;
  border-left: 1.5px solid #cc5c20;
}
</style>
